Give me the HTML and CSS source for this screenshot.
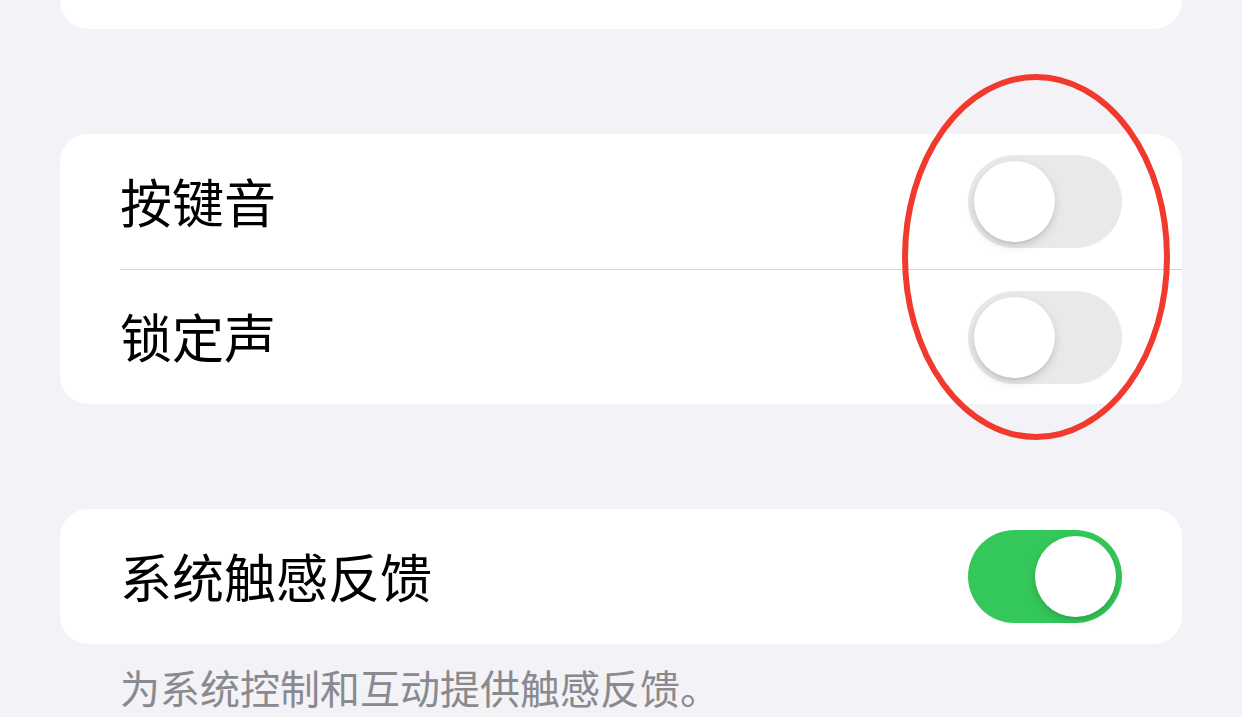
FILE: index.html
```html
<!DOCTYPE html>
<html lang="zh-CN">
<head>
    <meta charset="UTF-8">
    <meta name="viewport" content="width=device-width, initial-scale=1.0">
    <title>声音与触感</title>
    <link rel="stylesheet" href="styles.css">
</head>
<body>
<div class="page">
    <div class="group group-top"></div>

    <div class="group">
        <div class="row">
            <span class="label">按键音</span>
            <span class="switch"><span class="knob"></span></span>
        </div>
        <div class="row">
            <span class="label">锁定声</span>
            <span class="switch"><span class="knob"></span></span>
        </div>
    </div>

    <div class="group">
        <div class="row">
            <span class="label">系统触感反馈</span>
            <span class="switch on"><span class="knob"></span></span>
        </div>
    </div>
    <p class="footer">为系统控制和互动提供触感反馈。</p>

    <svg class="mark" width="280" height="380" viewBox="0 0 280 380">
        <ellipse cx="140" cy="190" rx="131" ry="180" fill="none" stroke="#f2392e" stroke-width="6"/>
    </svg>
</div>
</body>
</html>
```

FILE: styles.css
```css
html, body {
    margin: 0;
    padding: 0;
    background-color: #f2f2f7;
}

body {
    font-family: "Noto Sans CJK SC", "Noto Sans", sans-serif;
    color: #000;
}

.page {
    position: relative;
    width: 1242px;
    height: 717px;
    overflow: hidden;
    padding: 0 60px;
    box-sizing: border-box;
}

.group {
    background-color: #fff;
    border-radius: 28px;
    margin-top: 105px;
}

.group-top {
    height: 29px;
    margin-top: 0;
    border-radius: 0 0 28px 28px;
}

.row {
    display: flex;
    align-items: center;
    justify-content: space-between;
    height: 135px;
    margin-left: 60px;
    padding-right: 60px;
    box-sizing: border-box;
}

.row + .row {
    border-top: 1px solid #d4d4d8;
}

.label {
    font-size: 52px;
    line-height: 1;
    margin-bottom: 2px;
}

.switch {
    position: relative;
    width: 154px;
    height: 93px;
    border-radius: 47px;
    background-color: #e9e9eb;
}

.switch .knob {
    position: absolute;
    top: 6px;
    left: 6px;
    width: 81px;
    height: 81px;
    border-radius: 50%;
    background-color: #fff;
    box-shadow: 0 4px 10px rgba(0, 0, 0, 0.14), 0 2px 2px rgba(0, 0, 0, 0.06);
}

.switch.on {
    background-color: #34c759;
}

.switch.on .knob {
    left: auto;
    right: 6px;
}

.footer {
    margin: 23px 0 0 60px;
    font-size: 40px;
    line-height: 1;
    color: #8a8a8e;
}

.mark {
    position: absolute;
    left: 896px;
    top: 67px;
}
```
